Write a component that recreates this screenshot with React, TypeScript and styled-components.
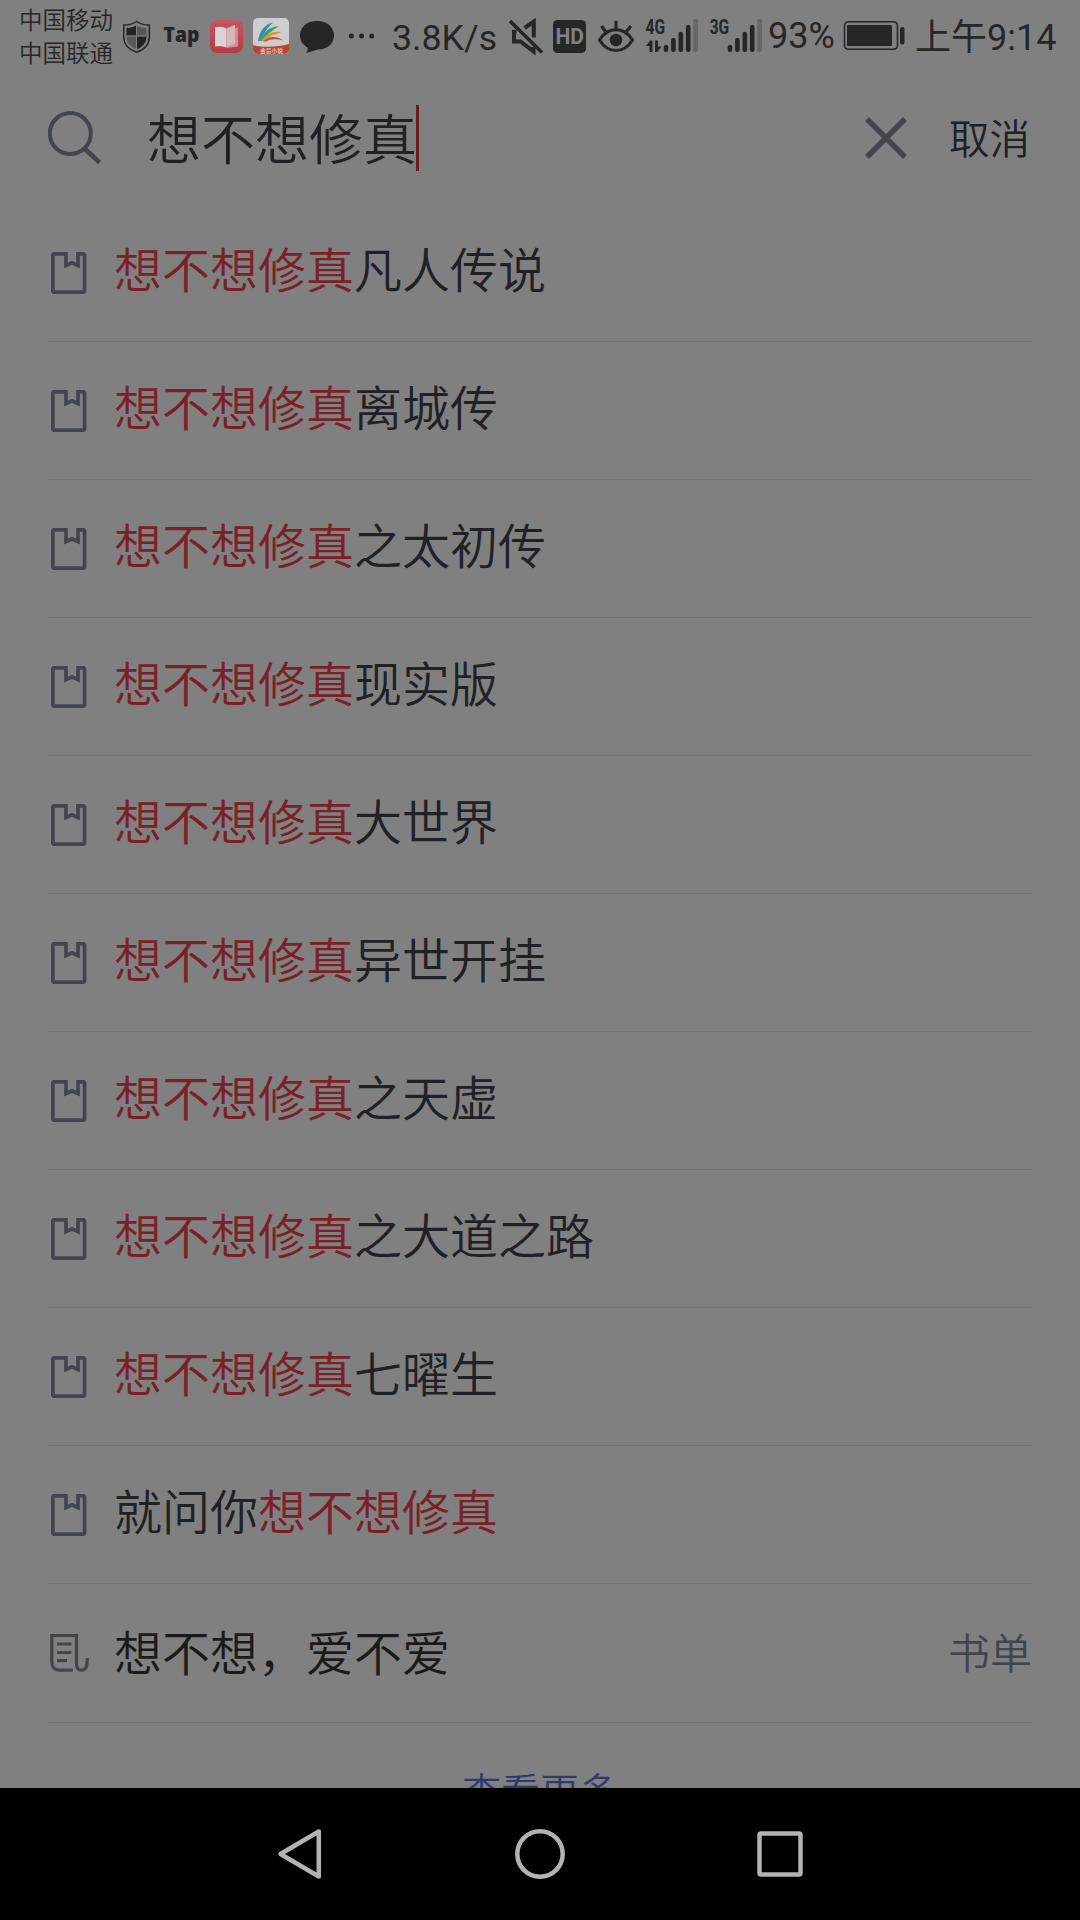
import styled, { createGlobalStyle } from 'styled-components';

const GlobalStyle = createGlobalStyle`
  * { box-sizing: border-box; }
  body {
    margin: 0;
    background: #808080;
    font-family: Roboto, "Noto Sans CJK SC", sans-serif;
  }
`;

const Screen = styled.div`
  width: 1080px;
  height: 1920px;
  display: flex;
  flex-direction: column;
  overflow: hidden;
  background: #808080;
  color: #1f2125;
`;

/* ---- status bar ---- */

const StatusBar = styled.header`
  height: 72px;
  flex: none;
  display: flex;
  align-items: center;
  padding-left: 19px;
  color: #262626;

  svg {
    flex: none;
    display: block;
  }
`;

const Carriers = styled.div`
  width: 104px;
  flex: none;
  font-size: 23.5px;
  font-weight: 350;
  line-height: 33px;
  padding-top: 4px;
  white-space: nowrap;
`;

const StatusText = styled.span<{ $width: number; $shift?: number; $size?: number }>`
  width: ${(p) => p.$width}px;
  flex: none;
  font-size: ${(p) => p.$size || 36}px;
  line-height: 42px;
  white-space: nowrap;
  padding-top: ${(p) => p.$shift || 0}px;
`;

const NoticeIcons = () => (
  <svg width="269" height="72" viewBox="123 0 269 72">
    {/* shield */}
    <path d="M136.500 21.500 C140 24 145 25 149.300 25 V37 C149.300 45 143 50 136.500 52.200 C130 50 123.700 45 123.700 37 V25 C128 25 133 24 136.500 21.500Z" fill="#808080" stroke="#262626" strokeWidth="1.500" />
    <path d="M136.500 25.500 C140 27.500 143.500 28 146.500 28 V37 C146.500 43 142 47 136.500 49.300 C131 47 126.500 43 126.500 37 V28 C129.500 28 133 27.500 136.500 25.500Z" fill="#585858" />
    <path d="M136 25.500 V35.500 H126.500 V28 C129.500 28 133 27.500 136 25.500Z M137 36.500 H146.500 C146.500 43 142 47 137 49.300Z" fill="#222" />
    <path d="M136.500 25 V49 M126.500 36 H146.500" stroke="#808080" strokeWidth="1" />
    <text x="163.500" y="42" fontFamily="Open Sans" fontWeight="800" fontSize="21.500" textLength="36" lengthAdjust="spacingAndGlyphs" fill="#262626">Tap</text>

    {/* reader app */}
    <defs>
      <linearGradient id="reader" x1="0" y1="0" x2="0" y2="1">
        <stop offset="0" stopColor="#c45565" />
        <stop offset="1" stopColor="#b53c44" />
      </linearGradient>
    </defs>
    <rect x="210" y="20" width="33" height="33" rx="7" fill="url(#reader)" />
    <path d="M228 29 L238 27.500 V46.500 L227 48Z" fill="#d08f96" />
    <path d="M215 27.500 C219 26 223 26.500 226.300 28.500 V47.500 C223 46 219 46 215 46.500Z" fill="#d9d3d4" />
    <path d="M226.300 28.500 L235 24.800 V43.500 L226.300 47.500Z" fill="#d8b7bb" />

    {/* second app */}
    <rect x="253" y="18" width="36" height="36" rx="5" fill="#cdcdcd" />
    <path d="M253 45 C264 48 278 47 289 44 V49 A5 5 0 0 1 284 54 H258 A5 5 0 0 1 253 49Z" fill="#bd4238" />
    <path d="M258 41 C259.500 31 265 24 273 22.500 C267 28 264 33 260 41Z" fill="#2b8fb8" />
    <path d="M260 41 C263 32 269 27 279 26 C272 31 267 34 262 41Z" fill="#3f9e6b" />
    <path d="M261.500 41 C266 34 272 31 282 32 C275 34.500 269 36 264 41Z" fill="#d09a35" />
    <path d="M263 41.500 C269 36 276 35.500 283.500 40.500 C276 38.500 270 39 266 41.500Z" fill="#c9503a" />
    <text transform="translate(260 52.700) scale(0.480)" fontSize="12" fontWeight="700" fontFamily="Noto Sans CJK SC" fill="#e0c5c0">会员小说</text>

    {/* chat bubble and overflow dots */}
    <path d="M317 21 C327 21 334 27 334 35.500 C334 44 327 49.500 318 49.500 C314 50 310 52.500 306 52.700 C307.500 51 308 49.500 307.500 47.500 C303 45 300 41 300 35.500 C300 27 307 21 317 21Z" fill="#262626" />
    <g fill="#262626">
      <circle cx="351.300" cy="36" r="2.500" />
      <circle cx="361.500" cy="36" r="2.500" />
      <circle cx="371.700" cy="36" r="2.500" />
    </g>
  </svg>
);

const Bars = ({ x }: { x: number }) => (
  <g>
    {[45, 38, 31.7, 25, 19].map((top, i) => (
      <rect key={top} x={x + i * 7.4} y={top} width="4.600" height={52 - top} rx="2" fill={i === 4 ? '#656565' : '#262626'} />
    ))}
  </g>
);

const SignalIcons = () => (
  <svg width="261" height="72" viewBox="507 0 261 72">
    <g fill="none" stroke="#262626" strokeWidth="4">
      {/* muted speaker */}
      <path d="M510 21 L542 52.500" strokeWidth="3.500" />
      <path d="M516.500 31.800 H514 V41.500 H520.500 L533.500 51.500 V47" />
      <path d="M524.500 28 L533.800 21.500 V37.500" />
      {/* eye */}
      <path d="M599.500 40 Q606 29.700 616 29.700 Q626 29.700 632.500 40 Q626 50.500 616 50.500 Q606 50.500 599.500 40Z" strokeWidth="3.200" />
      <path d="M616 29 V21 M605.500 31.500 L601.500 26 M626.500 31.500 L631 26" strokeWidth="3.200" />
    </g>
    <circle cx="616" cy="40" r="6.300" fill="#262626" />
    <rect x="553" y="20" width="33" height="33" rx="4.500" fill="#262626" />
    <text x="555.500" y="44.200" fontFamily="Roboto" fontWeight="700" fontSize="22.500" textLength="28.500" lengthAdjust="spacingAndGlyphs" fill="#808080">HD</text>
    <g fill="#262626" fontFamily="Roboto" fontWeight="700" fontSize="20.500">
      <text x="645.500" y="33.800" textLength="19.500" lengthAdjust="spacingAndGlyphs">4G</text>
      <text x="709.700" y="33.800" textLength="19.500" lengthAdjust="spacingAndGlyphs">3G</text>
    </g>
    <path d="M646 46 L650 40.500 H652.500 V52 H649.500 V46Z M655 40.500 H658 V46.500 H661.500 L657.500 52 H655Z" fill="#262626" />
    <Bars x={663.7} />
    <Bars x={727.7} />
  </svg>
);

const Battery = () => (
  <svg width="73" height="72" viewBox="842 0 73 72">
    <rect x="844.500" y="21.700" width="53" height="27.600" rx="4" fill="none" stroke="#262626" strokeWidth="1.600" />
    <rect x="847" y="25" width="45" height="21" rx="1" fill="#262626" />
    <rect x="900" y="27" width="4.500" height="17.500" rx="2" fill="#262626" />
  </svg>
);

/* ---- search bar ---- */

const SearchBar = styled.div`
  height: 132px;
  flex: none;
  display: flex;
  align-items: flex-start;
  padding: 33px 50px 0 48px;
  font-weight: 350;
`;

const Query = styled.div`
  flex: 1;
  display: flex;
  align-items: center;
  height: 66px;
  margin-left: 43px;
  font-size: 54px;
  line-height: 60px;

  span {
    padding-top: 7px;
  }
`;

const Caret = styled.i`
  width: 3px;
  height: 66px;
  margin-left: -1px;
  background: #6e1b1d;
`;

const Cancel = styled.button`
  margin: 0 0 0 41px;
  padding: 0;
  border: 0;
  background: none;
  color: #1f2125;
  font: inherit;
  font-size: 40.5px;
  line-height: 70px;
`;

/* ---- suggestions ---- */

const List = styled.ul`
  flex: 1;
  min-height: 0;
  overflow: hidden;
  list-style: none;
  margin: 0;
  padding: 0 48px;
  font-weight: 350;
`;

const Row = styled.li<{ $tall?: boolean }>`
  height: ${(p) => (p.$tall ? 139 : 138)}px;
  display: flex;
  align-items: center;
  padding: ${(p) => (p.$tall ? '4px 0 0' : '0 0 1px')};
  border-bottom: 1px solid #747474;

  svg {
    flex: none;
    margin-top: ${(p) => (p.$tall ? -4 : 2)}px;
  }
`;

const Title = styled.span<{ $plain?: boolean }>`
  flex: 1;
  margin-left: 24px;
  font-size: 48px;
  line-height: 60px;
  color: ${(p) => (p.$plain ? '#1a1a1a' : '#1f2125')};
`;

const Hit = styled.em`
  font-style: normal;
  color: #7b2026;
`;

const Tag = styled.span`
  font-size: 42px;
  line-height: 60px;
  color: #42454d;
`;

const More = styled.li`
  padding-top: 42px;
  text-align: center;
  font-size: 39px;
  line-height: 56px;
  color: #2d3b6b;
`;

const BookIcon = () => (
  <svg width="42" height="42" viewBox="0 0 42 42" fill="none" stroke="#42454d" strokeWidth="3.700">
    <path d="M18 1.800 H6.500 Q4.900 1.800 4.900 3.400 V38.600 Q4.900 40.200 6.500 40.200 H35 Q36.600 40.200 36.600 38.600 V3.400 Q36.600 1.800 35 1.800 H30 V13.600 L24 10.800 L18 13.600 V0" />
  </svg>
);

const BookListIcon = () => (
  <svg width="42" height="42" viewBox="0 0 42 42" fill="none" stroke="#42454d" strokeWidth="3.200">
    <path d="M25 38.200 H12 Q3.800 38.200 3.800 30 V3.500 H28.500 V32 Q28.500 38.200 33.500 38.200 Q38.700 38.200 39 31 L39.300 26" />
    <path d="M9 12 H23.500 M9 20.500 H23.500 M9 28.700 H19" />
  </svg>
);

/* ---- system navigation ---- */

const NavBar = styled.nav`
  height: 132px;
  flex: none;
  display: flex;
  align-items: center;
  justify-content: center;
  gap: 190px;
  background: #000;
`;

const keyword = '想不想修真';

const suggestions = [
  '想不想修真凡人传说',
  '想不想修真离城传',
  '想不想修真之太初传',
  '想不想修真现实版',
  '想不想修真大世界',
  '想不想修真异世开挂',
  '想不想修真之天虚',
  '想不想修真之大道之路',
  '想不想修真七曜生',
  '就问你想不想修真',
];

const Suggestion = ({ text }: { text: string }) => {
  const [before, after] = text.split(keyword);
  return (
    <Row>
      <BookIcon />
      <Title>
        {before}
        <Hit>{keyword}</Hit>
        {after}
      </Title>
    </Row>
  );
};

const App = () => {
  return (
    <Screen lang="zh-CN">
      <GlobalStyle />
      <StatusBar>
        <Carriers>
          中国移动
          <br />
          中国联通
        </Carriers>
        <NoticeIcons />
        <StatusText $width={115} $shift={3} $size={35.7}>3.8K/s</StatusText>
        <SignalIcons />
        <StatusText $width={74}>93%</StatusText>
        <Battery />
        <StatusText $width={150} $shift={3}>上午9:14</StatusText>
      </StatusBar>

      <SearchBar>
        <svg width="56" height="66" viewBox="48 105 56 66" fill="none" stroke="#42454d" strokeWidth="4">
          <circle cx="70.300" cy="133.500" r="20.500" />
          <path d="M84.500 148.500 L99.500 162.500" strokeWidth="4.500" />
        </svg>
        <Query>
          <span>{keyword}</span>
          <Caret />
        </Query>
        <svg width="44" height="66" viewBox="863 105 44 66" stroke="#42454d" strokeWidth="5.500">
          <path d="M866 119 L904 157 M904 119 L866 157" />
        </svg>
        <Cancel>取消</Cancel>
      </SearchBar>

      <List>
        {suggestions.map((text) => (
          <Suggestion key={text} text={text} />
        ))}
        <Row $tall>
          <BookListIcon />
          <Title $plain>想不想，爱不爱</Title>
          <Tag>书单</Tag>
        </Row>
        <More>查看更多</More>
      </List>

      <NavBar>
        <svg width="50" height="52" viewBox="275 1828 50 52" fill="none" stroke="#b3b3b3" strokeWidth="4.500" strokeLinejoin="round">
          <path d="M280.500 1854 L318.800 1831.500 V1876.500Z" />
        </svg>
        <svg width="50" height="52" viewBox="515 1828 50 52" fill="none" stroke="#b3b3b3" strokeWidth="4.500">
          <circle cx="540" cy="1854" r="22.700" />
        </svg>
        <svg width="50" height="52" viewBox="755 1828 50 52" fill="none" stroke="#b3b3b3" strokeWidth="4.500">
          <rect x="759.500" y="1833.500" width="41" height="41" rx="1.500" />
        </svg>
      </NavBar>
    </Screen>
  );
};

export default App;
